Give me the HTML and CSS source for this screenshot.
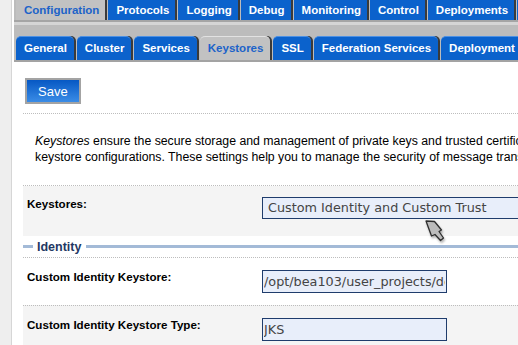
FILE: index.html
```html
<!DOCTYPE html>
<html lang="en">
<head>
<meta charset="UTF-8">
<meta name="viewport" content="width=device-width, initial-scale=1.0">
<title>Keystores</title>
<link rel="stylesheet" href="styles.css">
</head>
<body>
<div class="page">
    <div class="gutter"></div>
    <div class="main">
        <div class="tabbar">
            <div class="tabs tabs-top">
                <span class="tab active">Configuration</span>
                <span class="tab">Protocols</span>
                <span class="tab">Logging</span>
                <span class="tab">Debug</span>
                <span class="tab">Monitoring</span>
                <span class="tab">Control</span>
                <span class="tab">Deployments</span>
                <span class="tab">Services</span>
            </div>
            <div class="tabs tabs-sub">
                <span class="tab">General</span>
                <span class="tab">Cluster</span>
                <span class="tab">Services</span>
                <span class="tab active">Keystores</span>
                <span class="tab">SSL</span>
                <span class="tab">Federation Services</span>
                <span class="tab">Deployment</span>
            </div>
        </div>

        <div class="toolbar">
            <button class="save-btn">Save</button>
        </div>

        <div class="intro">
            <p><em>Keystores</em> ensure the secure storage and management of private keys and trusted certificate authorities (CAs). This page lets you view and define various<br>keystore configurations. These settings help you to manage the security of message transmissions.</p>
        </div>

        <div class="row shaded first">
            <label class="label">Keystores:</label>
            <div class="field wide">Custom Identity and Custom Trust</div>
        </div>

        <div class="section"><span>Identity</span></div>

        <div class="row">
            <label class="label">Custom Identity Keystore:</label>
            <input class="field" type="text" value="/opt/bea103/user_projects/domains/base_domain/identity.jks">
        </div>

        <div class="row shaded">
            <label class="label">Custom Identity Keystore Type:</label>
            <input class="field" type="text" value="JKS">
        </div>
    </div>
</div>

<!-- mouse pointer sitting over the form -->
<svg class="pointer" width="24" height="27" viewBox="0 0 24 27">
    <path d="M3 3 L11.5 3.5 L18.5 12 L16 13.5 L20.5 20 L17.5 22.5 L12 16.5 L8.5 18 Z" fill="#bcbcbc" stroke="#2e2e2e" stroke-width="1.3" stroke-linejoin="round"/>
</svg>
</body>
</html>
```

FILE: styles.css
```css
html, body {
    margin: 0;
    overflow: hidden;
}
body {
    font-family: "Liberation Sans", Arial, sans-serif;
    background-color: #fff;
    color: #000;
}
.page {
    display: flex;
    width: 780px;
    min-height: 345px;
}
.gutter {
    flex: none;
    width: 11px;
    background-color: #eeeeee;
    border-right: 1px solid #d6d6d6;
}
.main {
    flex: 1;
    padding-left: 2px;
}
/* Tabs */
.tabbar {
    background-color: #bcbcbc;
    border-bottom: 2px solid #a3a3a3;
}
.tabs {
    display: flex;
    gap: 3px;
    padding-left: 2px;
}
.tabs-top {
    height: 20px;
    border-bottom: 2px solid #a5a5a5;
}
.tabs-sub {
    border-top: 3px solid #d5d5d5;
    padding-top: 11px;
}
.tab {
    flex: none;
    font-size: 11.5px;
    font-weight: bold;
    color: #fff;
    background-color: #0b62cc;
    padding: 0 6px 0 8px;
    box-shadow: 2px 0 0 #3a3a3a;
    white-space: nowrap;
}
.tabs-top .tab {
    line-height: 20px;
}
.tabs-sub .tab {
    line-height: 23px;
    padding-right: 7px;
    border-top: 1px solid #4d91e4;
    border-radius: 5px 5px 0 0;
}
.tab.active {
    background-color: #c2c2c2;
    color: #1c63c9;
}
.tabs-sub .tab.active {
    border-top-color: #e2e2e2;
}
/* Save bar */
.toolbar {
    margin-left: 9px;
    padding: 16px 0 9px 2px;
    border-bottom: 1px dotted #bdbdbd;
}
.save-btn {
    font-family: "Liberation Sans", Arial, sans-serif;
    font-size: 13px;
    color: #fff;
    height: 26px;
    padding: 0 11px;
    border: 2px solid #a3a3a3;
    background: linear-gradient(#0658c4, #3a8ce6);
    cursor: pointer;
}
.intro {
    margin-left: 9px;
    padding: 19px 0 20px 12px;
    border-bottom: 1px dotted #bdbdbd;
}
.intro p {
    margin: 0;
    font-size: 12.3px;
    line-height: 16px;
    white-space: nowrap;
}
/* Form rows */
.row {
    display: flex;
    align-items: flex-start;
    margin-left: 9px;
    padding: 12px 0 12px 4px;
}
.row + .row {
    border-top: 1px dotted #bdbdbd;
}
.row.shaded {
    background-color: #f4f4f4;
}
.row.first {
    padding-top: 11px;
    padding-bottom: 17px;
}
.label {
    width: 235px;
    flex: none;
    font-size: 11.6px;
    font-weight: bold;
    line-height: 14px;
}
.field {
    box-sizing: border-box;
    width: 185px;
    height: 23px;
    margin: 0;
    padding: 0 1px;
    border: 1px solid #1f3c6c;
    border-radius: 0;
    background-color: #e8eefa;
    font-family: "DejaVu Sans", sans-serif;
    font-size: 12.8px;
    color: #444;
    outline: none;
}
.field.wide {
    width: 300px;
    height: 22px;
    line-height: 20px;
    padding-left: 5px;
    white-space: nowrap;
}
/* Section heading */
.section {
    display: flex;
    align-items: center;
    gap: 4px;
    height: 21px;
    margin-left: 9px;
    border-bottom: 1px dotted #bdbdbd;
    font-size: 12.5px;
    font-weight: bold;
    color: #1f3864;
}
.section::before,
.section::after {
    content: "";
    height: 3px;
    background-color: #a3bad7;
}
.section::before {
    width: 10px;
}
.section::after {
    flex: 1;
    margin-left: 1px;
}
.pointer {
    position: absolute;
    left: 423px;
    top: 218px;
    filter: drop-shadow(1px 2px 1px rgba(0, 0, 0, 0.3));
}
```
